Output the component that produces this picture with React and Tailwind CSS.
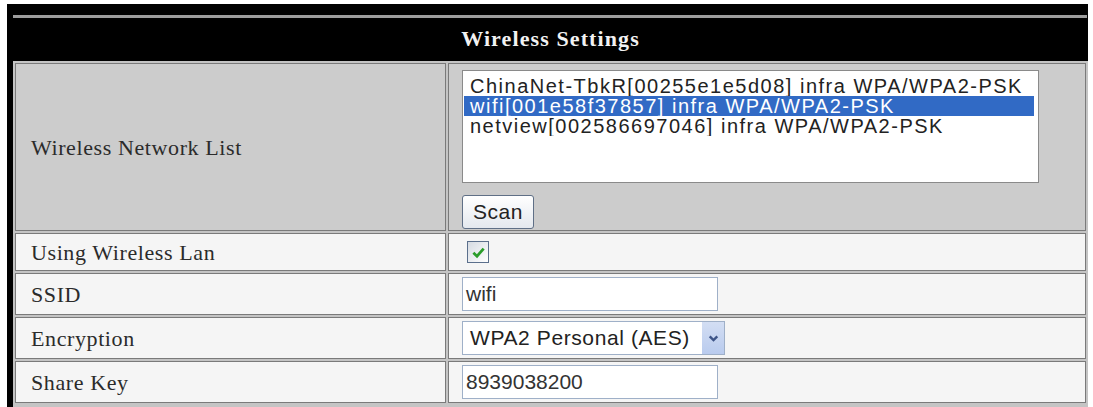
import React from "react";

const serif = { fontFamily: '"Liberation Serif", "Times New Roman", serif' };
const sans = { fontFamily: '"Liberation Sans", Arial, sans-serif' };

const networks = [
  "ChinaNet-TbkR[00255e1e5d08] infra WPA/WPA2-PSK",
  "wifi[001e58f37857] infra WPA/WPA2-PSK",
  "netview[002586697046] infra WPA/WPA2-PSK",
];

const Row = ({ label, height, shade = "bg-[#f5f5f5]", children }) => (
  <div className="flex gap-[2px]" style={{ height }}>
    <div
      className={`flex w-[431px] items-center border border-[#7a7a7a] pl-[15px] text-[22px] tracking-[0.6px] text-[#2b2b2b] ${shade}`}
      style={serif}
    >
      {label}
    </div>
    <div className={`flex flex-1 border border-[#7a7a7a] pl-[13px] ${shade}`}>{children}</div>
  </div>
);

const TextBox = ({ value }) => (
  <div
    className="flex h-[34px] w-[256px] items-center border border-[#9fb0c8] bg-white pl-[3px] text-[21px] text-[#333]"
    style={sans}
  >
    {value}
  </div>
);

export default function App() {
  return (
    <div className="min-h-screen bg-white pl-[7px] pt-[4px]">
      <div className="w-[1081px] bg-black pl-[6px]">
        <div className="pt-[11px] pr-[1px]">
          <div className="h-[3px] bg-[#9c9c9c]" />
        </div>
        <div
          className="flex h-[43px] items-center justify-center pb-[2px] text-[22px] font-bold tracking-[1.1px] text-[#f2f2f2]"
          style={serif}
        >
          Wireless Settings
        </div>
        <div className="flex flex-col gap-[2px] bg-[#c4c4c4] p-[2px] pb-[8px]">
          <Row label="Wireless Network List" height={168} shade="bg-[#cccccc]">
            <div className="flex flex-col pt-[6px]">
              <div
                className="h-[113px] w-[577px] border border-[#8a8a8a] bg-white pt-[5px] text-[20px] leading-[20px] tracking-[1.5px] text-[#222]"
                style={sans}
              >
                {networks.map((n, i) => (
                  <div
                    key={n}
                    className={`mx-[1px] h-[20px] overflow-hidden whitespace-nowrap pl-[6px] ${
                      i === 1 ? "mr-[4px] bg-[#316ac5] text-white" : ""
                    }`}
                  >
                    {n}
                  </div>
                ))}
              </div>
              <button
                className="mt-[12px] flex h-[34px] w-[72px] items-center justify-center rounded-[3px] border border-[#5f6f86] bg-gradient-to-b from-white to-[#e4e8ee] text-[21px] tracking-[0.5px] text-[#222]"
                style={sans}
              >
                Scan
              </button>
            </div>
          </Row>
          <Row label="Using Wireless Lan" height={38}>
            <div className="flex items-center pl-[5px]">
              <div className="flex h-[22px] w-[22px] items-center justify-center border border-[#5b6f8c] bg-gradient-to-br from-[#d6dbe2] to-white">
                <svg viewBox="0 0 14 14" className="h-[15px] w-[15px]">
                  <path d="M2.2 7.2 L5.6 10.4 L11.8 3.4" fill="none" stroke="#2a9d2a" strokeWidth="2.6" />
                </svg>
              </div>
            </div>
          </Row>
          <Row label="SSID" height={42}>
            <div className="flex items-center">
              <TextBox value="wifi" />
            </div>
          </Row>
          <Row label="Encryption" height={42}>
            <div className="flex items-center">
              <div
                className="flex h-[34px] w-[263px] items-center border border-[#9fb0c8] bg-white text-[21px] tracking-[0.6px] text-[#222]"
                style={sans}
              >
                <span className="flex-1 whitespace-nowrap pl-[7px]">WPA2 Personal (AES)</span>
                <span className="flex h-full w-[22px] items-center justify-center bg-gradient-to-b from-[#d3def3] to-[#b9cbee]">
                  <svg viewBox="0 0 12 12" className="h-[13px] w-[13px]">
                    <path d="M2.5 4 L6 7.5 L9.5 4" fill="none" stroke="#3d5487" strokeWidth="2.2" />
                  </svg>
                </span>
              </div>
            </div>
          </Row>
          <Row label="Share Key" height={42}>
            <div className="flex items-center">
              <TextBox value="8939038200" />
            </div>
          </Row>
        </div>
      </div>
    </div>
  );
}
